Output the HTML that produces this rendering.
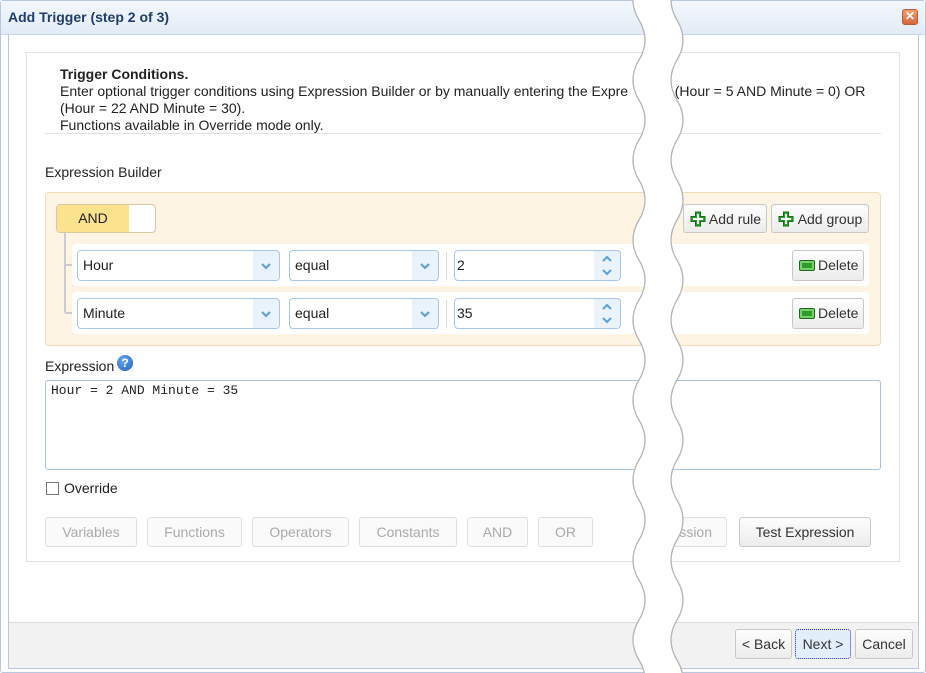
<!DOCTYPE html>
<html><head><style>
*{box-sizing:border-box;margin:0;padding:0}
body{width:926px;height:673px;overflow:hidden;background:#fff;font-family:"Liberation Sans",Arial,sans-serif;font-size:14px;color:#222;position:relative}
.a{position:absolute}
.btn{position:absolute;border:1px solid #c8c8c8;border-radius:3px;background:linear-gradient(#fdfdfd,#ececec);text-align:center;font-size:14px;color:#333;line-height:28px}
.dis{color:#aaa;background:#fafafa;border-color:#e0e0e0}
.sel{position:absolute;border:1px solid #a9c6e6;border-radius:4px;background:#fff;height:31px;line-height:29px;padding-left:5px}
.sel .ar{position:absolute;right:0;top:0;width:26px;height:29px;background:#eaf3fc;border-radius:0 4px 4px 0}
.row{position:absolute;left:72px;width:797px;height:42px;background:#fff;border-radius:4px}
.del{position:absolute;left:792px;width:72px;height:31px;border:1px solid #c8c8c8;border-radius:3px;background:linear-gradient(#fdfdfd,#ececec);font-size:14px;line-height:29px;padding-left:25px;color:#333}
.del i{position:absolute;left:6px;top:9px;width:16px;height:11px;background:#2a9d2a;border:1px solid #176b17;border-radius:2px;box-shadow:inset 0 0 0 2px #7ccf6e}
.plus{position:absolute;left:6px;top:6px;width:16px;height:16px}
</style></head><body>
<div class="a" style="left:0;top:0;width:926px;height:673px;border:1px solid #b6c9e0;border-radius:3px"></div>
<div class="a" style="left:1px;top:1px;width:924px;height:34px;background:linear-gradient(#f3f7fc,#e2ebf6);border-bottom:1px solid #c9d7e8"></div>
<div class="a" style="left:8px;top:9px;font-weight:bold;color:#1e3d6b;font-size:14px">Add Trigger (step 2 of 3)</div>
<div class="a" style="left:902px;top:9px;width:16px;height:16px;border-radius:3px;background:linear-gradient(#f0a070,#d9663a);border:1px solid #b85a35;color:#fff;font-size:12px;line-height:13px;text-align:center;font-weight:bold">✕</div>
<div class="a" style="left:8px;top:35px;width:911px;height:634px;border-left:1px solid #b6c9e0;border-right:1px solid #b6c9e0;border-bottom:1px solid #b6c9e0"></div>
<div class="a" style="left:26px;top:52px;width:874px;height:510px;border:1px solid #e2e2e2"></div>
<div class="a" style="left:60px;top:66px;line-height:17px;width:820px">
<b>Trigger Conditions.</b><br>Enter optional trigger conditions using Expression Builder or by manually entering the Expre&nbsp;&nbsp;&nbsp;&nbsp;&nbsp;&nbsp;&nbsp;&nbsp;&nbsp;&nbsp;&nbsp;&nbsp;(Hour = 5 AND Minute = 0) OR<br>(Hour = 22 AND Minute = 30).<br>Functions available in Override mode only.</div>
<div class="a" style="left:45px;top:133px;width:836px;height:1px;background:#e2e2e2"></div>
<div class="a" style="left:45px;top:164px">Expression Builder</div>
<div class="a" style="left:45px;top:192px;width:836px;height:154px;background:#fdf4e3;border:1px solid #f0ddb5;border-radius:4px"></div>
<div class="a" style="left:56px;top:204px;width:100px;height:29px;border:1px solid #d8c9a0;border-radius:4px;background:#fff;overflow:hidden"><div style="width:72px;height:27px;background:#fae28f;text-align:center;line-height:27px">AND</div></div>
<div class="a" style="left:64px;top:233px;width:9px;height:81px;border-left:2px solid #ccc;border-bottom:2px solid #ccc;border-radius:0 0 0 3px"></div>
<div class="a" style="left:64px;top:264px;width:9px;height:2px;background:#ccc"></div>
<div class="btn" style="left:683px;top:204px;width:84px;height:29px;padding-left:20px">Add rule<svg class="plus" viewBox="0 0 16 16"><path d="M5.5 1h5v4.5H15v5h-4.5V15h-5v-4.5H1v-5h4.5z" fill="#2aa52a" stroke="#156f15"/><path d="M7 3h2v4h4v2H9v4H7V9H3V7h4z" fill="#fff"/></svg></div>
<div class="btn" style="left:771px;top:204px;width:98px;height:29px;padding-left:20px">Add group<svg class="plus" viewBox="0 0 16 16"><path d="M5.5 1h5v4.5H15v5h-4.5V15h-5v-4.5H1v-5h4.5z" fill="#2aa52a" stroke="#156f15"/><path d="M7 3h2v4h4v2H9v4H7V9H3V7h4z" fill="#fff"/></svg></div>
<div class="row" style="top:244px"></div>
<div class="row" style="top:292px"></div>
<div class="a" style="left:446px;top:252px;width:1px;height:27px;background:#ddd"></div>
<div class="a" style="left:446px;top:300px;width:1px;height:27px;background:#ddd"></div>
<div class="sel" style="left:77px;top:250px;width:203px">Hour<div class="ar"><svg width="26" height="29"><path d="M9 13l4 4 4-4" fill="none" stroke="#5aa0d8" stroke-width="2"/></svg></div></div>
<div class="sel" style="left:289px;top:250px;width:150px">equal<div class="ar"><svg width="26" height="29"><path d="M9 13l4 4 4-4" fill="none" stroke="#5aa0d8" stroke-width="2"/></svg></div></div>
<div class="sel" style="left:454px;top:250px;width:167px;padding-left:2px">2<div class="ar"><svg width="26" height="29"><path d="M9 10l4-4 4 4M9 19l4 4 4-4" fill="none" stroke="#5aa0d8" stroke-width="2"/></svg></div></div>
<div class="del" style="top:250px"><i></i>Delete</div>
<div class="sel" style="left:77px;top:298px;width:203px">Minute<div class="ar"><svg width="26" height="29"><path d="M9 13l4 4 4-4" fill="none" stroke="#5aa0d8" stroke-width="2"/></svg></div></div>
<div class="sel" style="left:289px;top:298px;width:150px">equal<div class="ar"><svg width="26" height="29"><path d="M9 13l4 4 4-4" fill="none" stroke="#5aa0d8" stroke-width="2"/></svg></div></div>
<div class="sel" style="left:454px;top:298px;width:167px;padding-left:2px">35<div class="ar"><svg width="26" height="29"><path d="M9 10l4-4 4 4M9 19l4 4 4-4" fill="none" stroke="#5aa0d8" stroke-width="2"/></svg></div></div>
<div class="del" style="top:298px"><i></i>Delete</div>
<div class="a" style="left:45px;top:358px">Expression</div>
<div class="a" style="left:117px;top:355px;width:16px;height:16px;border-radius:50%;background:radial-gradient(circle at 40% 35%,#6aa8ee,#1a5fc0);color:#fff;font-weight:bold;font-size:12px;line-height:16px;text-align:center">?</div>
<div class="a" style="left:45px;top:380px;width:836px;height:90px;border:1px solid #a9c3dd;border-radius:3px;font-family:'Liberation Mono',monospace;font-size:13px;padding:2px 5px">Hour = 2 AND Minute = 35</div>
<div class="a" style="left:46px;top:482px;width:13px;height:13px;border:1px solid #777;background:#fff"></div>
<div class="a" style="left:64px;top:480px">Override</div>
<div class="btn dis" style="left:45px;top:517px;width:92px;height:30px">Variables</div>
<div class="btn dis" style="left:147px;top:517px;width:95px;height:30px">Functions</div>
<div class="btn dis" style="left:252px;top:517px;width:97px;height:30px">Operators</div>
<div class="btn dis" style="left:359px;top:517px;width:98px;height:30px">Constants</div>
<div class="btn dis" style="left:467px;top:517px;width:61px;height:30px">AND</div>
<div class="btn dis" style="left:538px;top:517px;width:55px;height:30px">OR</div>
<div class="btn dis" style="left:650px;top:517px;width:77px;height:30px;text-align:right;padding-right:14px">ssion</div>
<div class="btn" style="left:739px;top:517px;width:132px;height:30px">Test Expression</div>
<div class="a" style="left:9px;top:622px;width:909px;height:46px;background:#f2f2f2;border-top:1px solid #dcdcdc"></div>
<div class="btn" style="left:735px;top:629px;width:57px;height:30px">&lt; Back</div>
<div class="btn" style="left:795px;top:629px;width:56px;height:30px;background:#e3eefb;border:1px dotted #2233aa">Next &gt;</div>
<div class="btn" style="left:855px;top:629px;width:58px;height:30px">Cancel</div>
<svg class="a" style="left:0;top:0" width="926" height="673">
<path d="M639 -20 Q627 0 639 20 T639 60 T639 100 T639 140 T639 180 T639 220 T639 260 T639 300 T639 340 T639 380 T639 420 T639 460 T639 500 T639 540 T639 580 T639 620 T639 660 T639 700 L677 700 Q689 680 677 660 T677 620 T677 580 T677 540 T677 500 T677 460 T677 420 T677 380 T677 340 T677 300 T677 260 T677 220 T677 180 T677 140 T677 100 T677 60 T677 20 T677 -20 Z" fill="#fff" stroke="#b5b5b5" stroke-width="1.3"/>
</svg>
</body></html>
